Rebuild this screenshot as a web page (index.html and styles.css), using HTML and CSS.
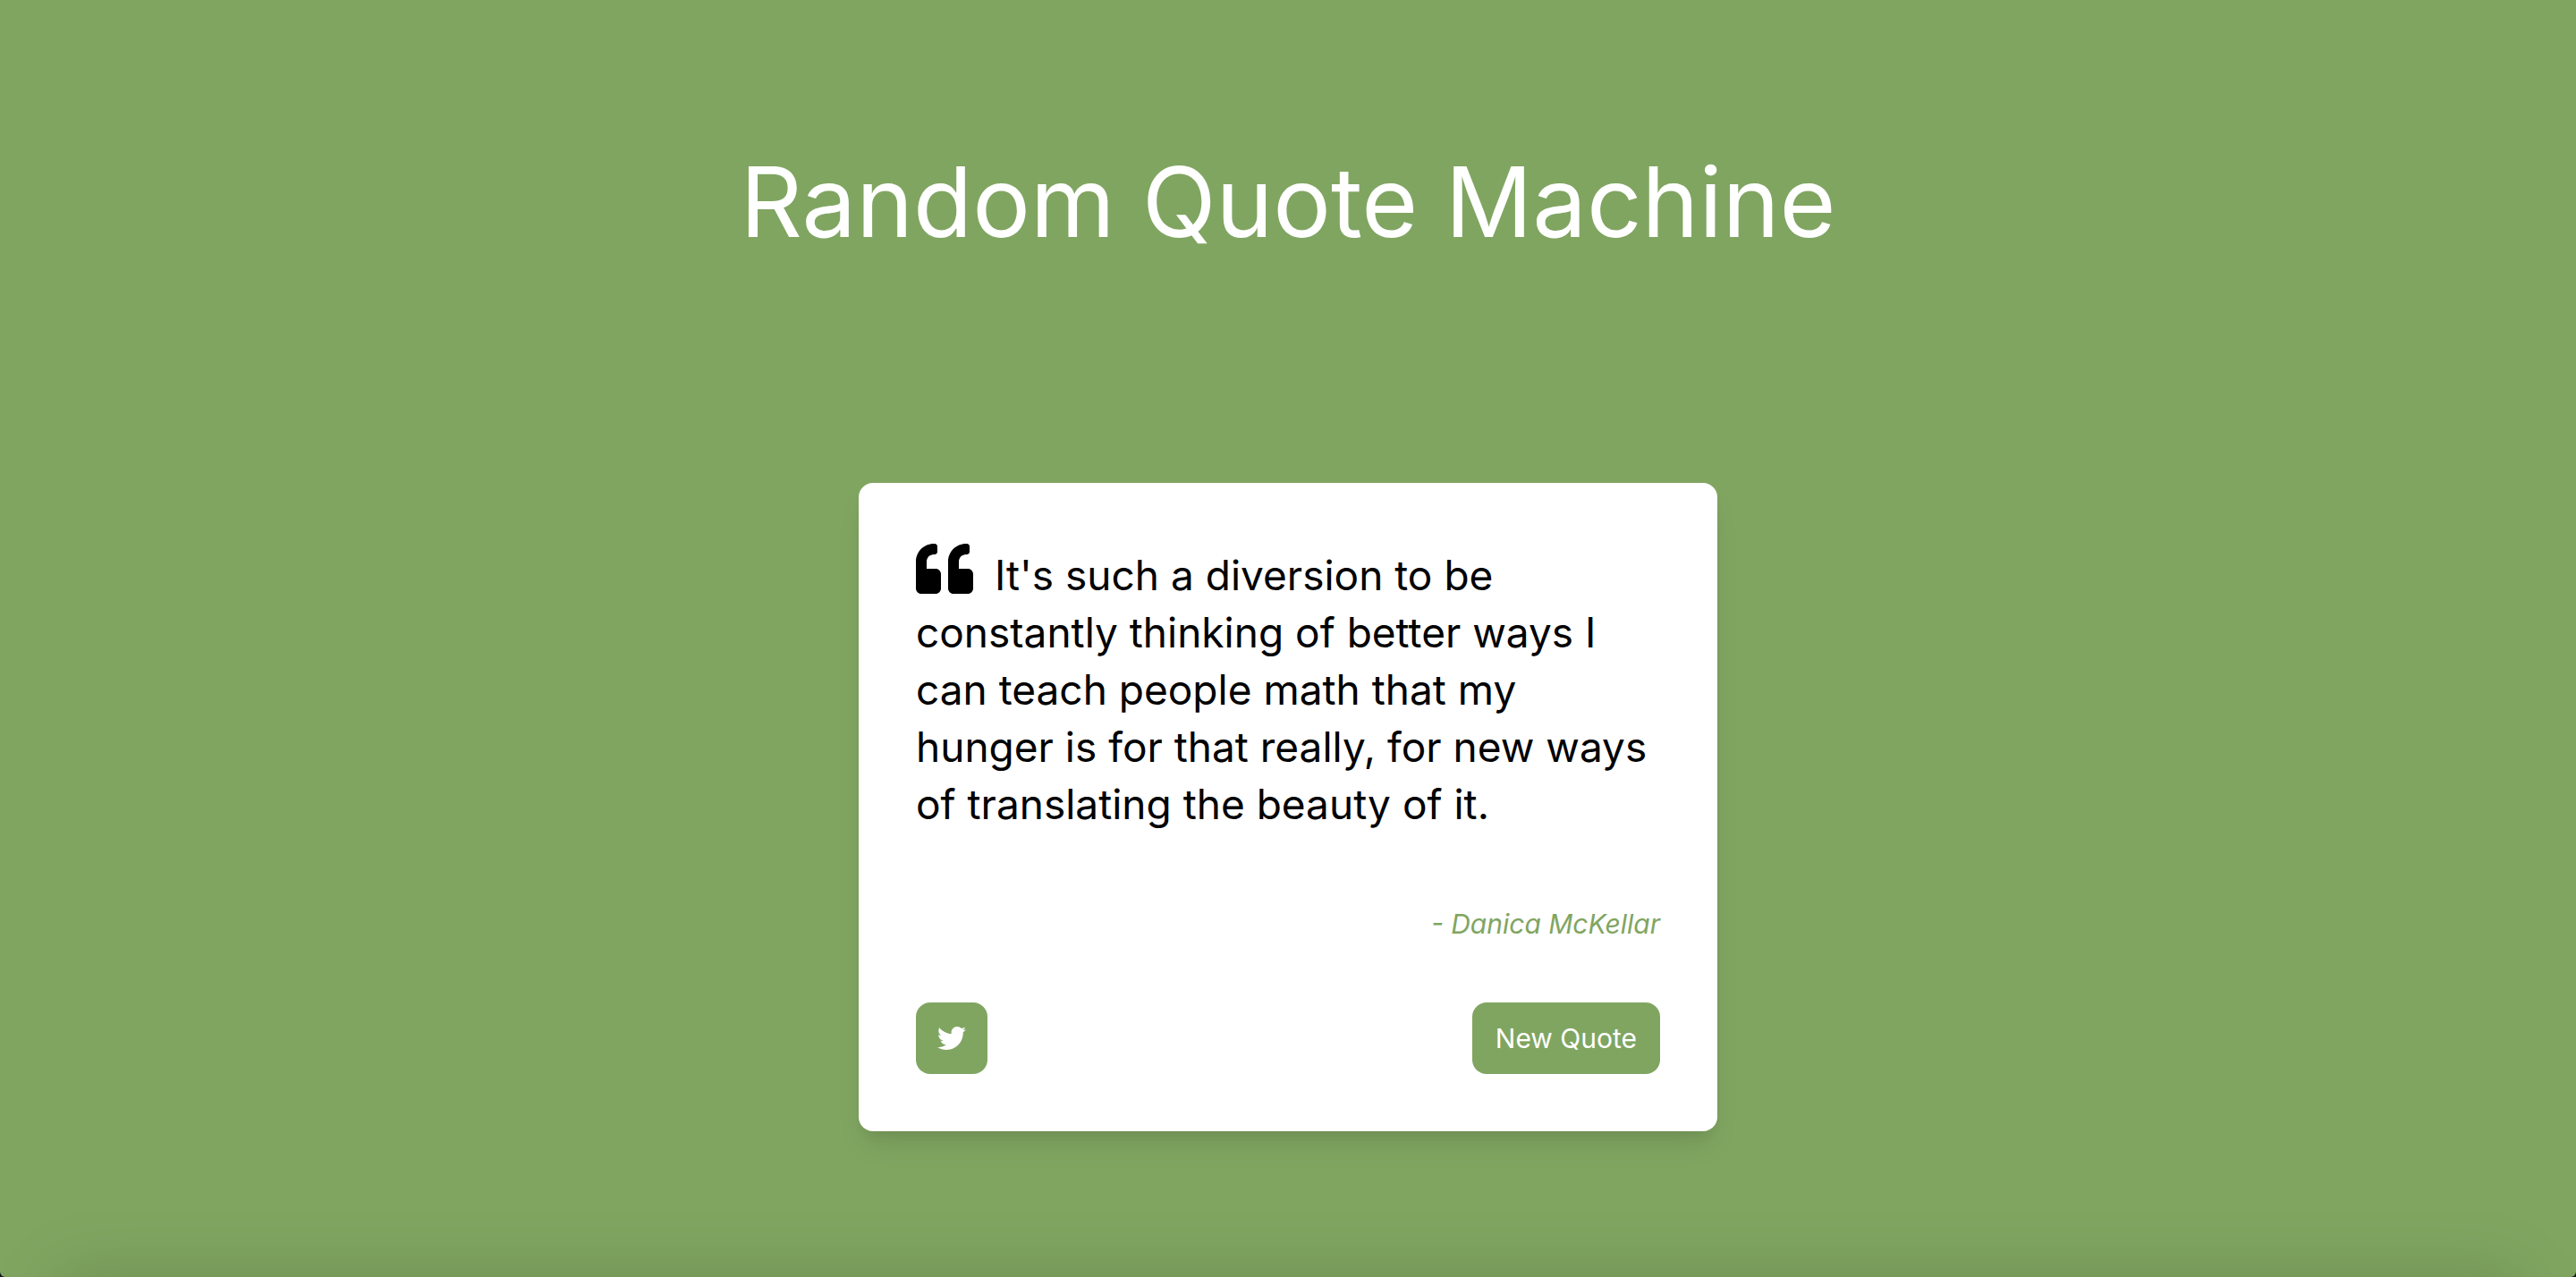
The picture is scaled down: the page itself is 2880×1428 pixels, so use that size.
FILE: index.html
```html
<!DOCTYPE html>
<html lang="en">
<head>
<meta charset="utf-8">
<title>Random Quote Machine</title>
<link rel="stylesheet" href="styles.css">
</head>
<body>
<main class="page">
  <h1 class="title">Random Quote Machine</h1>
  <section class="card">
    <p class="quote"><svg class="quote-icon" viewBox="0 0 512 512" aria-hidden="true"><path d="M464 256h-80v-64c0-35.300 28.700-64 64-64h8c13.300 0 24-10.700 24-24V56c0-13.300-10.700-24-24-24h-8c-88.400 0-160 71.600-160 160v240c0 26.500 21.500 48 48 48h128c26.500 0 48-21.500 48-48V304c0-26.500-21.500-48-48-48zm-288 0H96v-64c0-35.300 28.700-64 64-64h8c13.300 0 24-10.700 24-24V56c0-13.300-10.700-24-24-24h-8C71.600 32 0 103.600 0 192v240c0 26.500 21.500 48 48 48h128c26.500 0 48-21.500 48-48V304c0-26.500-21.500-48-48-48z"/></svg>It's such a diversion to be constantly thinking of better ways I can teach people math that my hunger is for that really, for new ways of translating the beauty of it.</p>
    <p class="author">- Danica McKellar</p>
    <div class="actions">
      <a class="button tweet" href="#" aria-label="Tweet this quote"><svg class="tweet-icon" viewBox="0 0 512 512" aria-hidden="true"><path d="M459.370 151.716c.325 4.548.325 9.097.325 13.645 0 138.720-105.583 298.558-298.558 298.558-59.452 0-114.680-17.219-161.137-47.106 8.447.974 16.568 1.299 25.340 1.299 49.055 0 94.213-16.568 130.274-44.832-46.132-.975-84.792-31.188-98.112-72.772 6.498.974 12.995 1.624 19.818 1.624 9.421 0 18.843-1.300 27.614-3.573-48.081-9.747-84.143-51.980-84.143-102.985v-1.299c13.969 7.797 30.214 12.670 47.431 13.319-28.264-18.843-46.781-51.005-46.781-87.391 0-19.492 5.197-37.360 14.294-52.954 51.655 63.675 129.300 105.258 216.365 109.807-1.624-7.797-2.599-15.918-2.599-24.040 0-57.828 46.782-104.934 104.934-104.934 30.213 0 57.502 12.670 76.670 33.137 23.715-4.548 46.456-13.320 66.599-25.340-7.798 24.366-24.366 44.833-46.132 57.827 21.117-2.273 41.584-8.122 60.426-16.243-14.292 20.791-32.161 39.308-52.628 54.253z"/></svg></a>
      <button class="button" type="button">New Quote</button>
    </div>
  </section>
</main>
</body>
</html>
```
FILE: styles.css
```css
* { box-sizing: border-box; }
html { background: #10141a; }
body {
  margin: 0;
  font-family: Inter, "Liberation Sans", sans-serif;
}
.page {
  position: relative;
  overflow: hidden;
  min-height: 100vh;
  display: flex;
  flex-direction: column;
  align-items: center;
  padding: 154px 24px 48px;
  border-radius: 0 0 6px 6px;
  background: #80a561;
}
/* soft shade along the bottom edge of the page */
.page::after {
  content: "";
  position: absolute;
  top: 100%;
  left: 64px;
  right: 64px;
  height: 80px;
  box-shadow: 0 0 80px rgba(0, 0, 0, 0.15);
}
.title {
  margin: 0 0 242px;
  font-size: 108px;
  line-height: 144px;
  font-weight: 400;
  color: #fff;
}
.card {
  width: 100%;
  max-width: 960px;
  padding: 64px;
  border-radius: 16px;
  background: #fff;
  box-shadow: 0 20px 30px -6px rgba(0, 0, 0, 0.1), 0 8px 12px -4px rgba(0, 0, 0, 0.05);
}
.quote {
  margin: 0 0 78px;
  font-size: 46px;
  line-height: 64px;
  color: #000;
}
.quote-icon {
  width: 64px;
  height: 64px;
  margin-right: 24px;
  vertical-align: -8px;
}
.author {
  margin: 0 0 64px;
  font-size: 30px;
  line-height: 48px;
  font-style: italic;
  text-align: right;
  color: #80a561;
}
.actions {
  display: flex;
  justify-content: space-between;
}
.button {
  display: flex;
  align-items: center;
  justify-content: center;
  height: 80px;
  padding: 0 26px;
  border: 0;
  border-radius: 16px;
  background: #80a561;
  color: #fff;
  font: 30px Inter, "Liberation Sans", sans-serif;
}
.tweet {
  width: 80px;
  padding: 0;
}
.tweet-icon { width: 32px; height: 32px; }
svg { fill: currentColor; }
```
